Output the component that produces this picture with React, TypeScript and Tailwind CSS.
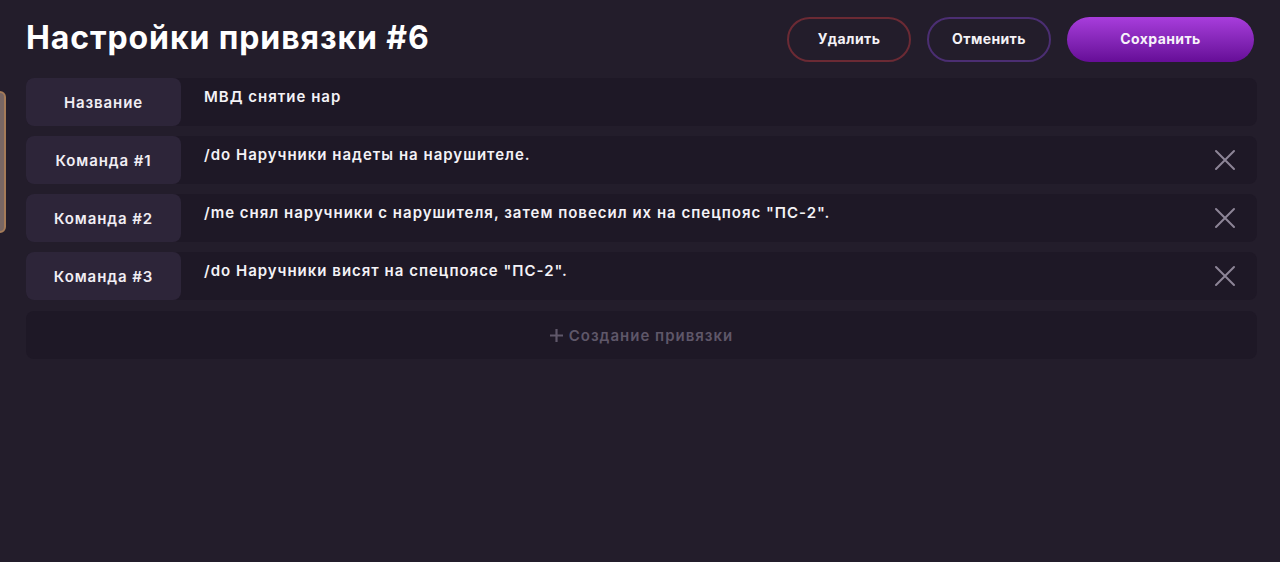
import React from 'react';

const FONT = "font-['Inter','Noto_Sans',sans-serif]";

const COMMANDS = [
  '/do Наручники надеты на нарушителе.',
  '/me снял наручники с нарушителя, затем повесил их на спецпояс "ПС-2".',
  '/do Наручники висят на спецпоясе "ПС-2".',
];

const CloseIcon: React.FC = () => (
  <svg width="22" height="22" viewBox="0 0 22 22" fill="none" stroke="#8d8597" strokeWidth={2} strokeLinecap="round">
    <path d="M2 2L20 20M20 2L2 20" />
  </svg>
);

const PlusIcon: React.FC = () => (
  <svg width="13" height="13" viewBox="0 0 13 13" fill="none" stroke="#5f5769" strokeWidth={2.2}>
    <path d="M6.5 0V13M0 6.5H13" />
  </svg>
);

const Row: React.FC<{ label: string; value: string; removable?: boolean }> = ({ label, value, removable }) => (
  <div className="flex h-12 rounded-lg bg-[#1e1826]">
    <div className="flex w-[155px] shrink-0 items-center justify-center rounded-lg bg-[#2d2539] pt-[3px] text-[15px] font-semibold tracking-[0.9px] text-[#f1eef4]">
      {label}
    </div>
    <div className="flex-1 pl-[23px] pt-[8px] text-[15px] font-semibold tracking-[1px] text-[#f4f2f6]">{value}</div>
    {removable && (
      <button className="mr-[21px] flex items-center">
        <CloseIcon />
      </button>
    )}
  </div>
);

const App: React.FC = () => {
  return (
    <div className={`relative h-[562px] w-full overflow-hidden bg-[#231d2b] ${FONT}`}>
      <div className="absolute left-[-10px] top-[91px] h-[142px] w-[16px] rounded-r-[6px] border-2 border-[#a57b58] bg-[#786663]" />

      <div className="pl-[26px] pr-[23px] pt-[16px]">
        <div className="mr-[3px] flex items-center justify-between">
          <h1 className="-mt-[2px] text-[32px] font-bold tracking-[0.9px] text-white">Настройки привязки #6</h1>
          <div className="flex gap-4">
            <button className="h-[45px] w-[124px] rounded-full border-2 border-[#6b2a34] text-sm font-bold tracking-[0.4px] text-[#f5f2f6]">
              Удалить
            </button>
            <button className="h-[45px] w-[124px] rounded-full border-2 border-[#4b2e72] text-sm font-bold tracking-[0.4px] text-[#f5f2f6]">
              Отменить
            </button>
            <button className="h-[45px] w-[187px] rounded-full bg-gradient-to-b from-[#a83ddc] to-[#660d97] text-sm font-bold tracking-[0.4px] text-[#f7f2fa]">
              Сохранить
            </button>
          </div>
        </div>

        <div className="mt-[16px] flex flex-col gap-[10px]">
          <Row label="Название" value="МВД снятие нар" />
          {COMMANDS.map((cmd, i) => (
            <Row key={i} label={`Команда #${i + 1}`} value={cmd} removable />
          ))}
          <button className="mt-px flex h-12 items-center justify-center gap-[6px] rounded-lg bg-[#1e1826] pt-[2px] text-[15px] font-semibold tracking-[1px] text-[#5f5769]">
            <span className="-mt-[2px]">
              <PlusIcon />
            </span>
            Создание привязки
          </button>
        </div>
      </div>
    </div>
  );
};

export default App;
